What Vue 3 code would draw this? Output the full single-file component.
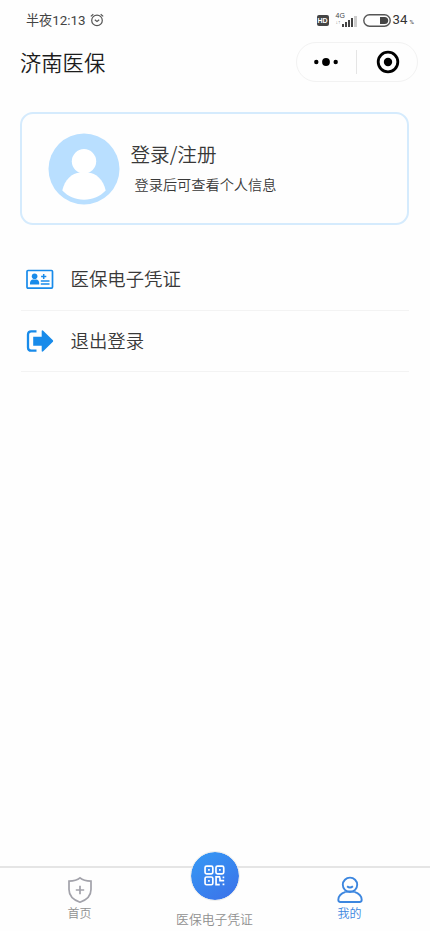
<script setup>
const signalBars = [3, 5, 7, 9, 11]
</script>

<template>
  <div class="page">
    <header class="status">
      <div class="time">
        <span class="clock">半夜<b>12:13</b></span>
        <svg class="alarm" viewBox="0 0 14 14">
          <circle cx="7" cy="7.4" r="5.3" />
          <path d="M4.8 6.7 7 8.5 9.2 6.7M.8 3.4 3.3 1.2M13.2 3.4 10.7 1.2" />
        </svg>
      </div>
      <div class="indicators">
        <span class="hd">HD</span>
        <div class="network">
          <div class="generation"><span>4G</span><span class="arrows">↓↑</span></div>
          <div class="bars">
            <i v-for="h in signalBars" :key="h" :style="{ height: h + 'px' }" :class="{ weak: h === 11 }"></i>
          </div>
        </div>
        <svg class="battery" viewBox="0 0 28 13">
          <rect x=".8" y=".8" width="26.4" height="11.4" rx="5.7" />
          <path d="M17 3H21.5Q25.2 3 25.2 6.5T21.5 10H17Z" />
        </svg>
        <span class="level">34</span><span class="percent">%</span>
      </div>
    </header>

    <div class="titlebar">
      <h1>济南医保</h1>
      <div class="capsule">
        <svg class="dots" viewBox="0 0 26 10">
          <circle cx="3.3" cy="5" r="2.2" /><circle cx="13" cy="5" r="3.9" /><circle cx="22.7" cy="5" r="2.2" />
        </svg>
        <span class="divider"></span>
        <svg class="target" viewBox="0 0 24 24">
          <circle class="ring" cx="12" cy="12" r="9.8" /><circle cx="12" cy="12" r="4.2" />
        </svg>
      </div>
    </div>

    <section class="card">
      <svg class="avatar" viewBox="0 0 72 72">
        <circle cx="36" cy="36" r="35.5" fill="#b9dfff" />
        <circle cx="36" cy="28.3" r="12.2" fill="#fff" />
        <path d="M14.3 57.5C16.5 47 24 39.8 32 39.8H40C48 39.8 55.5 47 57.7 57.5C52 63.5 45 66.7 36 66.7S20 63.5 14.3 57.5Z" fill="#fff" />
      </svg>
      <div class="account">
        <div class="login">登录/注册</div>
        <div class="hint">登录后可查看个人信息</div>
      </div>
    </section>

    <nav class="menu">
      <div class="row">
        <svg viewBox="0 0 28 24">
          <rect x="1" y="3.5" width="25.5" height="17.6" rx="1" fill="none" stroke="#188bea" stroke-width="1.7" />
          <circle cx="8.6" cy="9.3" r="2.8" fill="#188bea" />
          <path d="M4 17.4V15.8Q4.3 12.7 7 12.5H10.2Q12.9 12.7 13.2 15.8V17.4Z" fill="#188bea" />
          <path d="M17.7 6.9V12.1M15.1 9.5H20.3M14.8 14H23.5M14.8 17H23.5" fill="none" stroke="#188bea" stroke-width="1.5" />
        </svg>
        <span>医保电子凭证</span>
      </div>
      <div class="row">
        <svg viewBox="0 0 28 24">
          <path d="M10.5 2.3H5.3Q2 2.3 2 5.6V18.4Q2 21.7 5.3 21.7H10.5" fill="none" stroke="#188bea" stroke-width="2.3" />
          <path d="M7.2 7.7H15.7V1.7Q16.2 1 17.2 1.7L26.9 11.3Q27.5 12 26.9 12.7L17.2 22.3Q16.2 23 15.7 22.3V16.7H7.2Z" fill="#188bea" />
        </svg>
        <span>退出登录</span>
      </div>
    </nav>

    <footer class="tabs">
      <div class="tab home">
        <svg viewBox="0 0 26 28">
          <path d="M13 1.8Q9.3 5 2 5.1V13.5C2 20 6.6 24 13 26.2C19.4 24 24 20 24 13.5V5.1Q16.7 5 13 1.8Z" />
          <path d="M13 9.8V18.2M8.8 14H17.2" />
        </svg>
        <span>首页</span>
      </div>
      <div class="tab code">
        <div class="scan">
          <svg viewBox="0 0 20 20">
            <rect x="1" y="1" width="7.4" height="7.4" rx="1.5" /><rect x="11.4" y="1" width="7.4" height="7.4" rx="1.5" />
            <rect x="1" y="11.4" width="7.4" height="7.4" rx="1.5" />
            <path d="M3.9 4.7H5.5M14.3 4.7H15.9M3.9 15.1H5.5M15.5 11.3H11.5V18.7H15M15.2 12V14.8H19.2M18.5 11V12.6M17.7 18.5H19.4" />
          </svg>
        </div>
        <span>医保电子凭证</span>
      </div>
      <div class="tab mine">
        <svg viewBox="0 0 26 28">
          <circle cx="13" cy="8.8" r="7.2" />
          <path d="M10.1 10.2Q13 12.9 15.9 10.2M8.6 15.9C4.2 17.4 1.3 20.6 1.3 23.8Q1.3 26 3.4 26H22.6Q24.7 26 24.7 23.8C24.7 20.6 21.8 17.4 17.4 15.9" />
          <path d="M8.6 15.9Q13 14.8 17.4 15.9" />
        </svg>
        <span>我的</span>
      </div>
    </footer>
  </div>
</template>

<style>
body { background: #fefefe; }
</style>

<style scoped>
* { box-sizing: border-box; }
svg { display: block; flex: none; }
.page {
  width: 430px; height: 931px; display: flex; flex-direction: column; overflow: hidden;
  background: #fefefe; color: #383838; font-family: "Noto Sans CJK SC", sans-serif; font-weight: 350;
}
.status { height: 40px; padding: 0 16px 0 26px; display: flex; align-items: center; justify-content: space-between; }
.time, .indicators { display: flex; align-items: center; }
.clock { width: 58px; white-space: nowrap; font-size: 13.1px; font-weight: 400; line-height: 20px; color: #444; }
.clock b { font-family: Roboto, sans-serif; font-weight: 400; font-size: 13.4px; }
.alarm { width: 14px; height: 14px; margin-left: 6px; fill: none; stroke: #555; stroke-width: 1.2; }
.hd {
  width: 12px; height: 11px; border-radius: 2px; background: #444; color: #fff;
  font: 700 7px/11px "Liberation Sans", sans-serif; text-align: center;
}
.network { display: flex; align-items: flex-end; margin-left: 7px; width: 22px; height: 13px; }
.generation { width: 6px; height: 15px; display: flex; flex-direction: column; font: 400 7px/7px "Liberation Sans", sans-serif; color: #444; }
.generation span { white-space: nowrap; }
.generation .arrows { font-size: 5px; line-height: 7px; color: #888; }
.bars { display: flex; align-items: flex-end; gap: 1px; }
.bars i { width: 2.2px; background: #444; }
.bars i.weak { background: #ccc; }
.battery { width: 28px; height: 13px; margin-left: 5px; fill: none; stroke: #555; stroke-width: 1.4; }
.battery path { fill: #444; stroke: none; }
.level { width: 15px; margin-left: 2px; font: 400 13.2px/20px Roboto, sans-serif; color: #333; }
.percent { margin: 4px 0 0 2px; font: 500 6px/8px Roboto, sans-serif; color: #555; }
.titlebar { height: 44px; padding: 0 12px 0 20px; display: flex; justify-content: space-between; align-items: center; }
h1 { margin: 0; font-size: 21.3px; font-weight: 350; line-height: 30px; color: #1c1c1c; }
.capsule {
  width: 122px; height: 40px; border: 1px solid #f2f2f2; border-radius: 20px; padding: 0 17px 0 16px;
  display: flex; align-items: center; justify-content: space-between;
}
.dots { width: 26px; height: 10px; }
.divider { width: 1px; height: 24px; margin-right: 2px; background: #e5e5e5; }
.target { width: 24px; height: 24px; }
.target .ring { fill: none; stroke: #000; stroke-width: 2.8; }
.card {
  height: 113px; margin: 28px 21px 0 20px; padding-left: 26px; display: flex; align-items: center;
  border: 2px solid #d5ebfd; border-radius: 13px;
}
.avatar { width: 72px; height: 72px; }
.account { margin: 1px 0 0 10.5px; }
.login { font-size: 19.6px; line-height: 30px; }
.hint { margin-left: 4px; font-size: 14.2px; line-height: 30px; }
.menu { margin: 24px 21px 0; }
.row { height: 61.5px; display: flex; align-items: center; padding-left: 5px; border-bottom: 1px solid #f3f3f3; font-size: 18.4px; }
.row svg { width: 28px; height: 24px; }
.row span { margin: 0 0 2px 16.5px; line-height: 28px; }
.tabs { height: 65px; margin-top: auto; border-top: 2px solid #e5e5e5; display: grid; grid-template-columns: 159px 111px 159px; }
.tab { display: flex; flex-direction: column; align-items: center; font-size: 12px; line-height: 18px; color: #909090; }
.tab > svg { width: 26px; height: 28px; margin-top: 8px; fill: none; stroke: #a2a2aa; stroke-width: 1.7; }
.mine { color: #3c86df; }
.mine > svg { stroke: #3c86df; stroke-width: 1.9; }
.code { font-size: 12.8px; }
.scan {
  width: 50px; height: 50px; flex: none; margin-top: -17.5px; border: 1.5px solid #eeeeec; border-radius: 50%;
  display: flex; align-items: center; justify-content: center; background: linear-gradient(145deg, #359af5, #3c70e8);
  background-clip: padding-box;
}
.scan svg { width: 21px; height: 21px; fill: none; stroke: #fff; stroke-width: 1.6; }
.code span { margin-top: 9px; }
</style>
